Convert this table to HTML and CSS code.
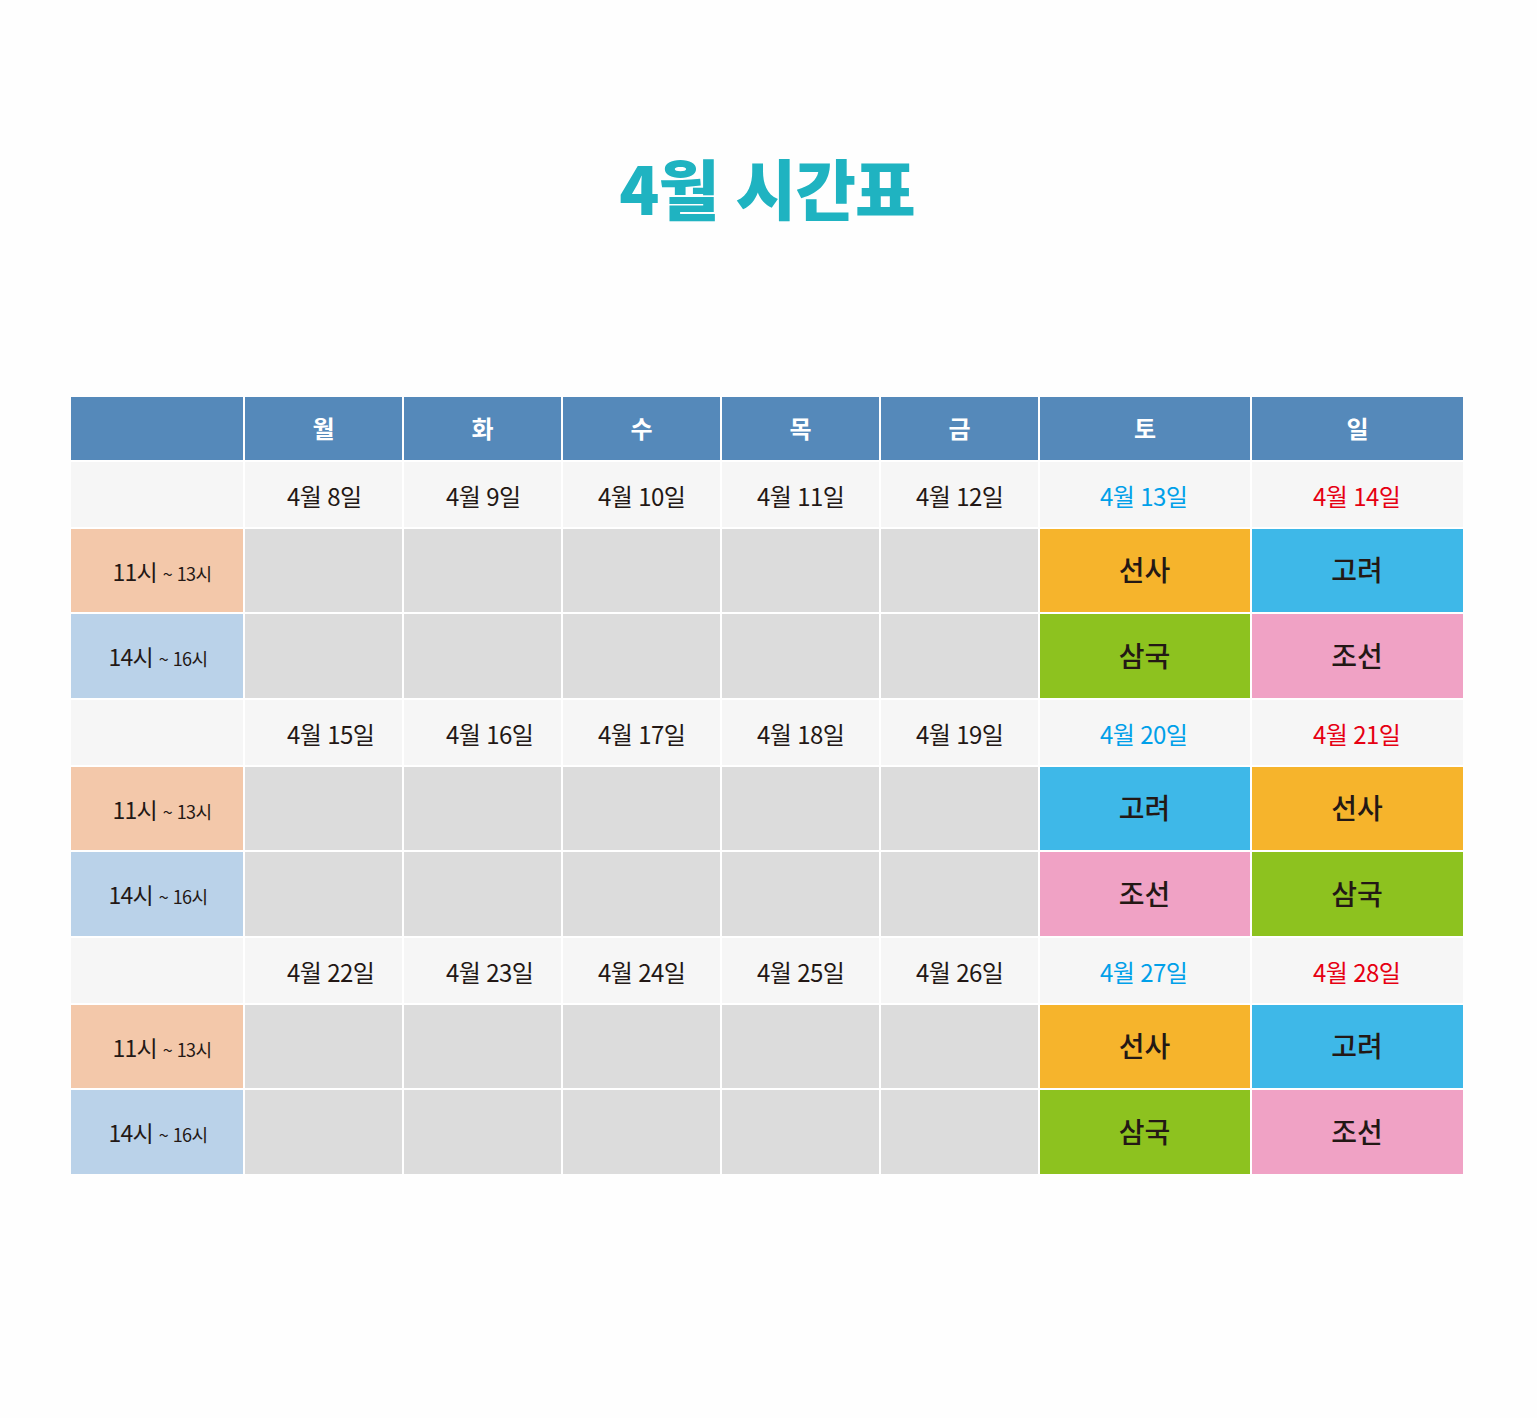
FILE: index.html
```html
<!DOCTYPE html>
<html lang="ko">
<head>
<meta charset="utf-8">
<title>4월 시간표</title>
<link rel="stylesheet" href="styles.css">
</head>
<body>
<main class="page">
  <h1 class="title">4월 시간표</h1>
  <div class="timetable">
    <div class="cell head"></div>
    <div class="cell head">월</div>
    <div class="cell head">화</div>
    <div class="cell head">수</div>
    <div class="cell head">목</div>
    <div class="cell head">금</div>
    <div class="cell head">토</div>
    <div class="cell head">일</div>

    <div class="cell date"></div>
    <div class="cell date mon">4월 8일</div>
    <div class="cell date tue">4월 9일</div>
    <div class="cell date wed">4월 10일</div>
    <div class="cell date thu">4월 11일</div>
    <div class="cell date fri">4월 12일</div>
    <div class="cell date sat">4월 13일</div>
    <div class="cell date sun">4월 14일</div>

    <div class="cell time am"><span>11시<small>~ 13시</small></span></div>
    <div class="cell empty"></div><div class="cell empty"></div><div class="cell empty"></div><div class="cell empty"></div><div class="cell empty"></div>
    <div class="cell subj seonsa">선사</div>
    <div class="cell subj goryeo">고려</div>

    <div class="cell time pm"><span>14시<small>~ 16시</small></span></div>
    <div class="cell empty"></div><div class="cell empty"></div><div class="cell empty"></div><div class="cell empty"></div><div class="cell empty"></div>
    <div class="cell subj samguk">삼국</div>
    <div class="cell subj joseon">조선</div>

    <div class="cell date"></div>
    <div class="cell date mon">4월 15일</div>
    <div class="cell date tue">4월 16일</div>
    <div class="cell date wed">4월 17일</div>
    <div class="cell date thu">4월 18일</div>
    <div class="cell date fri">4월 19일</div>
    <div class="cell date sat">4월 20일</div>
    <div class="cell date sun">4월 21일</div>

    <div class="cell time am"><span>11시<small>~ 13시</small></span></div>
    <div class="cell empty"></div><div class="cell empty"></div><div class="cell empty"></div><div class="cell empty"></div><div class="cell empty"></div>
    <div class="cell subj goryeo">고려</div>
    <div class="cell subj seonsa">선사</div>

    <div class="cell time pm"><span>14시<small>~ 16시</small></span></div>
    <div class="cell empty"></div><div class="cell empty"></div><div class="cell empty"></div><div class="cell empty"></div><div class="cell empty"></div>
    <div class="cell subj joseon">조선</div>
    <div class="cell subj samguk">삼국</div>

    <div class="cell date"></div>
    <div class="cell date mon">4월 22일</div>
    <div class="cell date tue">4월 23일</div>
    <div class="cell date wed">4월 24일</div>
    <div class="cell date thu">4월 25일</div>
    <div class="cell date fri">4월 26일</div>
    <div class="cell date sat">4월 27일</div>
    <div class="cell date sun">4월 28일</div>

    <div class="cell time am"><span>11시<small>~ 13시</small></span></div>
    <div class="cell empty"></div><div class="cell empty"></div><div class="cell empty"></div><div class="cell empty"></div><div class="cell empty"></div>
    <div class="cell subj seonsa">선사</div>
    <div class="cell subj goryeo">고려</div>

    <div class="cell time pm"><span>14시<small>~ 16시</small></span></div>
    <div class="cell empty"></div><div class="cell empty"></div><div class="cell empty"></div><div class="cell empty"></div><div class="cell empty"></div>
    <div class="cell subj samguk">삼국</div>
    <div class="cell subj joseon">조선</div>
  </div>
</main>
</body>
</html>
```

FILE: styles.css
```css
html, body {
  margin: 0;
  padding: 0;
  background: #fefefe;
}

body {
  font-family: "Noto Sans CJK KR", "Noto Sans", sans-serif;
  color: #231815;
}

.page {
  padding-top: 146px;
  padding-left: 71px;
  width: 1392px;
}

.title {
  margin: 0;
  height: 80px;
  line-height: 80px;
  text-align: center;
  font-size: 66px;
  font-weight: 900;
  letter-spacing: -1px;
  color: #1fb3c1;
}

.timetable {
  margin-top: 171px;
  display: grid;
  grid-template-columns: 172px repeat(5, 157px) 210px 211px;
  grid-template-rows: 63px repeat(3, 65px 83px 84px);
  gap: 2px;
  background: #ffffff;
}

.cell {
  display: flex;
  align-items: center;
  justify-content: center;
}

.head {
  background: #5589ba;
  color: #ffffff;
  font-size: 24px;
  font-weight: 700;
  padding-bottom: 3px;
}

.date {
  background: #f6f6f6;
  font-size: 24px;
  letter-spacing: -0.6px;
  padding-top: 1px;
  justify-content: flex-start;
  white-space: nowrap;
}

.date.mon { padding-left: 42px; }
.date.tue { padding-left: 42px; }
.date.wed { padding-left: 35px; }
.date.thu { padding-left: 35px; }
.date.fri { padding-left: 35px; }
.date.sat { padding-left: 60px; color: #00a0e9; }
.date.sun { padding-left: 61px; color: #e60012; }

.empty { background: #dcdcdc; }

.time {
  font-size: 23px;
  letter-spacing: -0.8px;
}
.time small {
  font-size: 18px;
  margin-left: 6px;
  letter-spacing: -0.6px;
}
.time.am { background: #f3c8aa; padding-left: 10px; }
.time.pm { background: #bad2e9; padding-left: 2px; }

.subj {
  font-size: 28px;
  font-weight: 500;
  padding-bottom: 3px;
  padding-right: 1px;
}
.seonsa { background: #f6b42c; }
.goryeo { background: #3eb8e8; }
.samguk { background: #8dc21f; }
.joseon { background: #f0a2c5; }
```
